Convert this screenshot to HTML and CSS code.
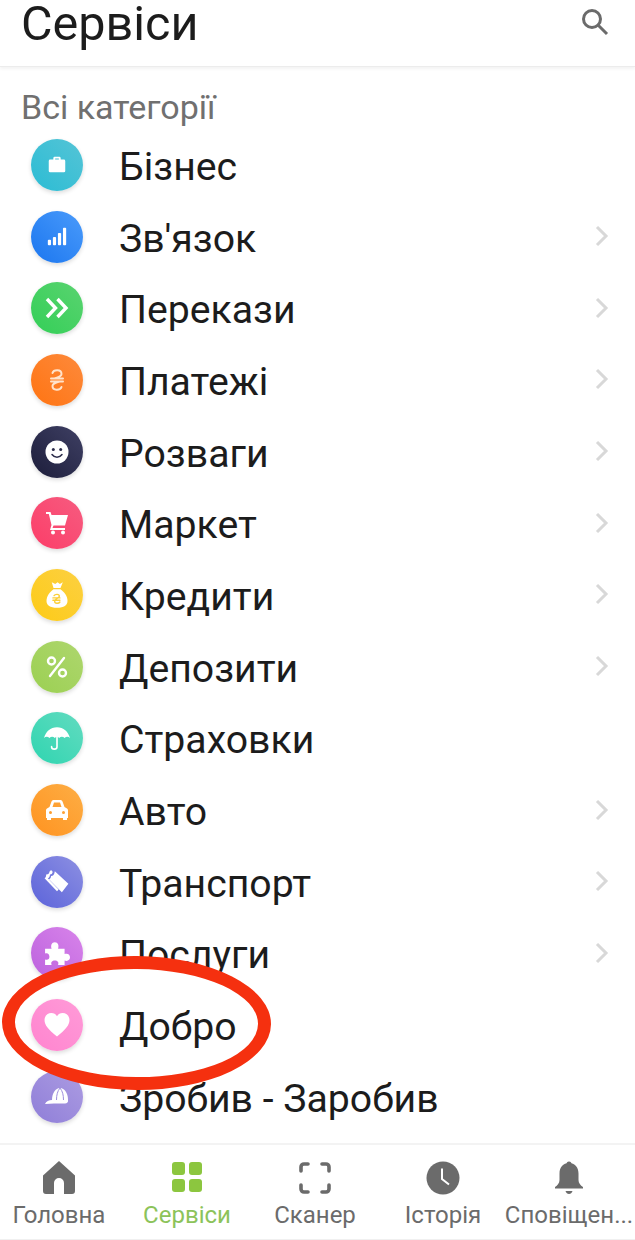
FILE: index.html
```html
<!DOCTYPE html>
<html lang="uk">
<head>
  <meta charset="UTF-8">
  <meta name="viewport" content="width=device-width, initial-scale=1.0">
  <title>Сервіси</title>
  <link rel="stylesheet" href="styles.css">
</head>
<body>
  <div class="container">
    <div class="header">
      <div class="header-title">Сервіси</div>
      <svg class="search-icon" viewBox="0 0 30 30"><circle cx="12" cy="12" r="8.5"/><path d="M18 18l9 9"/></svg>
    </div>

    <div class="content">
      <div class="section-title">Всі категорії</div>
      <div class="list">
        <div class="row">
          <div class="circle c-business">
            <svg viewBox="0 0 24 24"><path d="M8 6V4.500a1.500 1.500 0 0 1 1.500-1.500h5A1.500 1.500 0 0 1 16 4.500V6h3.500A1.500 1.500 0 0 1 21 7.500v11a1.500 1.500 0 0 1-1.500 1.500h-15A1.500 1.500 0 0 1 3 18.500v-11A1.500 1.500 0 0 1 4.500 6zM10 6h4V5h-4z" fill="#fff" fill-rule="evenodd"/></svg>
          </div>
          <div class="row-text">Бізнес</div>
        </div>
        <div class="row">
          <div class="circle c-signal">
            <svg viewBox="0 0 24 24" fill="#fff"><rect x="2" y="15" width="3.500" height="6" rx="1"/><rect x="7.500" y="12" width="3.500" height="9" rx="1"/><rect x="13" y="7.500" width="3.500" height="13.500" rx="1"/><rect x="18.500" y="2" width="3.500" height="19" rx="1"/></svg>
          </div>
          <div class="row-text">Зв'язок</div>
          <svg class="chevron" viewBox="0 0 14 22"><path d="M2 2l9 9-9 9"/></svg>
        </div>
        <div class="row">
          <div class="circle c-transfer">
            <svg class="big" viewBox="0 0 24 24" fill="none" stroke="#fff" stroke-width="3.400"><path d="M2 3l8.500 9L2 21M12.500 3l8.500 9-8.500 9"/></svg>
          </div>
          <div class="row-text">Перекази</div>
          <svg class="chevron" viewBox="0 0 14 22"><path d="M2 2l9 9-9 9"/></svg>
        </div>
        <div class="row">
          <div class="circle c-payment">
            <svg class="big" viewBox="0 0 24 24" fill="none" stroke="#ffe3cc" stroke-width="2" stroke-linecap="round"><path d="M7.500 5C8.500 1.500 16.500 1 16.500 6c0 3-4 3.500-7 4.500M14.500 13.500c-3 1-7 1.500-7 4.500 0 5 8 4.500 9 1M6 10.500h12M6 13.500h12"/></svg>
          </div>
          <div class="row-text">Платежі</div>
          <svg class="chevron" viewBox="0 0 14 22"><path d="M2 2l9 9-9 9"/></svg>
        </div>
        <div class="row">
          <div class="circle c-fun">
            <svg class="big" viewBox="0 0 24 24"><circle cx="12" cy="12" r="11.500" fill="#fff"/><circle cx="8.300" cy="9.500" r="1.500" fill="#2b2c4a"/><circle cx="15.700" cy="9.500" r="1.500" fill="#2b2c4a"/><path d="M7 14.500c2.500 3.500 7.500 3.500 10 0" fill="none" stroke="#2b2c4a" stroke-width="1.500" stroke-linecap="round"/></svg>
          </div>
          <div class="row-text">Розваги</div>
          <svg class="chevron" viewBox="0 0 14 22"><path d="M2 2l9 9-9 9"/></svg>
        </div>
        <div class="row">
          <div class="circle c-market">
            <svg class="big" viewBox="0 0 24 24" fill="#fff"><path d="M1 1h4.500l1 3H23l-3 10.500H8.500L7.500 17H20v2H5l1.500-5L3.800 3H1z"/><circle cx="8" cy="21.500" r="2"/><circle cx="18" cy="21.500" r="2"/></svg>
          </div>
          <div class="row-text">Маркет</div>
          <svg class="chevron" viewBox="0 0 14 22"><path d="M2 2l9 9-9 9"/></svg>
        </div>
        <div class="row">
          <div class="circle c-credit">
            <svg class="tall" viewBox="0 0 24 24"><path d="M7.500 1l3 1.500L12.500 1l2 1.500L17 1l-2 5H9z" fill="#fff"/><path d="M9 7h6c3.500 2.500 6 6 6 10 0 4-3 6-9 6s-9-2-9-6c0-4 2.500-7.500 6-10z" fill="#fff"/><path d="M9.500 12.500c1-1.500 4.500-1.500 4.500.5 0 1.500-4 2-4 4.500 0 2 3.500 2 4.500.5M8.500 14.500h6M8.500 16.500h6" fill="none" stroke="#fbcf38" stroke-width="1.200" stroke-linecap="round"/></svg>
          </div>
          <div class="row-text">Кредити</div>
          <svg class="chevron" viewBox="0 0 14 22"><path d="M2 2l9 9-9 9"/></svg>
        </div>
        <div class="row">
          <div class="circle c-deposit">
            <svg class="big" viewBox="0 0 24 24" fill="none" stroke="#fff" stroke-width="2.400" stroke-linecap="round"><circle cx="6.500" cy="6" r="3.500"/><circle cx="17.500" cy="18" r="3.500"/><path d="M19 3L5 21"/></svg>
          </div>
          <div class="row-text">Депозити</div>
          <svg class="chevron" viewBox="0 0 14 22"><path d="M2 2l9 9-9 9"/></svg>
        </div>
        <div class="row">
          <div class="circle c-insurance">
            <svg class="wide" viewBox="0 0 24 24"><path d="M12 2C18 2 22.500 6 24 12c-1.500-1.500-3.500-1.500-5 0-1.500-1.500-3.500-1.500-5 0-1.500-1.500-2.500-1.500-4 0-1.500-1.500-3.500-1.500-5 0-1.500-1.500-3.500-1.500-5 0C1.500 6 6 2 12 2z" fill="#fff"/><path d="M12 10v10c0 3-5 3-5 0" fill="none" stroke="#fff" stroke-width="1.500" stroke-linecap="round"/></svg>
          </div>
          <div class="row-text">Страховки</div>
        </div>
        <div class="row">
          <div class="circle c-auto">
            <svg class="big" viewBox="0 0 24 24"><path d="M4.500 9l2-5.500A2 2 0 0 1 8.400 2h7.200a2 2 0 0 1 1.900 1.500L19.500 9 22 10.500a2 2 0 0 1 1 1.700V20h-1v2h-4v-2H6v2H2v-2H1v-7.800a2 2 0 0 1 1-1.700zM7.500 9h9L15 4.500H9zM5.500 13a1.500 1.500 0 1 0 0 3 1.500 1.500 0 0 0 0-3zm13 0a1.500 1.500 0 1 0 0 3 1.500 1.500 0 0 0 0-3z" fill="#fff" fill-rule="evenodd"/></svg>
          </div>
          <div class="row-text">Авто</div>
          <svg class="chevron" viewBox="0 0 14 22"><path d="M2 2l9 9-9 9"/></svg>
        </div>
        <div class="row">
          <div class="circle c-transport">
            <svg class="wide" viewBox="0 0 24 24" fill="#fff"><path d="M10 2l12.500 11.500-6 8L4.500 9.500c1.500-.5 2-1.500 2-3 2 0 3-1.500 3.500-4.500z"/><path d="M5 2.500c0 1.500-1 2.500-3 2.500 0 2-.5 3-1.500 3.500L12 20.500l1.500-1.500L3.500 8.500C5 8 5.500 6.500 5.500 5 7 5 8 4 8 2.500L6.500 1z"/></svg>
          </div>
          <div class="row-text">Транспорт</div>
          <svg class="chevron" viewBox="0 0 14 22"><path d="M2 2l9 9-9 9"/></svg>
        </div>
        <div class="row">
          <div class="circle c-services">
            <svg class="wide" viewBox="0 0 24 24"><path d="M1 8h6C6 5 7 2 10 2s4 3 3 6h6v5c3-1 5 .5 5 3s-2 4-5 3v4h-6c1-2.500-.5-4-3-4s-4 1.500-3 4H1v-5c2.500 1 4-.5 4-2.500S3.500 11.500 1 12.500z" fill="#fff"/></svg>
          </div>
          <div class="row-text">Послуги</div>
          <svg class="chevron" viewBox="0 0 14 22"><path d="M2 2l9 9-9 9"/></svg>
        </div>
        <div class="row">
          <div class="circle c-good">
            <svg class="wide" viewBox="0 0 24 24"><path d="M12 22.500C4 16 .5 12 .5 7.500.5 3.500 3.500 1 6.800 1c2.200 0 4 1 5.200 3 1.200-2 3-3 5.200-3 3.300 0 6.300 2.500 6.300 6.500 0 4.500-3.500 8.500-11.500 15z" fill="#fff"/></svg>
          </div>
          <div class="row-text">Добро</div>
        </div>
        <div class="row">
          <div class="circle c-earn">
            <svg class="big" viewBox="0 0 24 24"><path d="M7 15C7 8 10.500 3 15 3s8 5 8 12z" fill="#fff"/><path d="M0 19c1-2.500 4-4 7-4h16c.5 2-1 3.500-3 3.500H9c-3 0-6 .5-9 .5z" fill="#fff"/><path d="M15 3c-2.500 3-3.500 7-3.500 12M15 3c2.500 3 3.500 7 3.500 12" fill="none" stroke="#9e8edd" stroke-width="1"/></svg>
          </div>
          <div class="row-text">Зробив - Заробив</div>
        </div>
      </div>
      <div class="highlight-ring"></div>
    </div>

    <div class="nav">
      <div class="nav-item">
        <svg viewBox="0 0 34 34" fill="#6b6b6b"><path d="M17 0L33 14.500V30a3 3 0 0 1-3 3h-8V22a5 5 0 0 0-10 0v11H4a3 3 0 0 1-3-3V14.500z"/></svg>
        <span>Головна</span>
      </div>
      <div class="nav-item active">
        <svg viewBox="0 0 34 34" fill="#8cc63f"><rect x="2" y="1" width="13" height="13" rx="3"/><rect x="19" y="1" width="13" height="13" rx="3"/><rect x="2" y="18" width="13" height="13" rx="3"/><rect x="19" y="18" width="13" height="13" rx="3"/></svg>
        <span>Сервіси</span>
      </div>
      <div class="nav-item">
        <svg viewBox="0 0 34 34" fill="none" stroke="#6b6b6b" stroke-width="3.600" stroke-linecap="round"><path d="M3 10V6a3 3 0 0 1 3-3h4M24 3h4a3 3 0 0 1 3 3v4M31 24v4a3 3 0 0 1-3 3h-4M10 31H6a3 3 0 0 1-3-3v-4"/></svg>
        <span>Сканер</span>
      </div>
      <div class="nav-item">
        <svg viewBox="0 0 34 34"><circle cx="17" cy="17" r="16.500" fill="#6b6b6b"/><path d="M16 7.500V18l7 5.500" fill="none" stroke="#fff" stroke-width="2"/></svg>
        <span>Історія</span>
      </div>
      <div class="nav-item">
        <svg viewBox="0 0 34 34" fill="#6b6b6b"><circle cx="17" cy="3" r="2.500"/><path d="M17 2c6 0 9.500 4.500 9.500 10.500V19c0 3 2 5.500 4.500 7v1.500H3V26c2.500-1.500 4.500-4 4.500-7v-6.500C7.500 6.500 11 2 17 2z"/><path d="M13.500 30h7c-.5 2-2 3-3.500 3s-3-1-3.500-3z"/></svg>
        <span>Сповіщен...</span>
      </div>
    </div>
  </div>
</body>
</html>
```

FILE: styles.css
```css
body {
  margin: 0;
  font-family: Roboto, "Noto Sans", sans-serif;
  background-color: #fff;
  color: #1c1c1c;
}
.container {
  display: flex;
  flex-direction: column;
  width: 635px;
  height: 1240px;
  overflow: hidden;
}
.header {
  display: flex;
  justify-content: space-between;
  height: 67px;
  padding: 0 25px 0 21px;
  box-sizing: border-box;
  border-bottom: 1px solid #ececec;
  box-shadow: 0 2px 3px rgba(0, 0, 0, 0.05);
}
.header-title {
  font-size: 48.5px;
  line-height: 48px;
}
.search-icon {
  width: 30px;
  height: 30px;
  margin-top: 7px;
  fill: none;
  stroke: #6b6b6b;
  stroke-width: 3;
}
.content {
  position: relative;
  flex: 1;
}
.section-title {
  padding: 23px 0 0 21px;
  font-size: 34px;
  line-height: 34px;
  color: #707070;
}
.list {
  display: flex;
  flex-direction: column;
  margin-top: 7px;
}
.row {
  display: flex;
  align-items: center;
  height: 71.7px;
  flex-shrink: 0;
  padding-left: 31px;
  padding-right: 26px;
}
.row-text {
  flex: 1;
  margin-left: 36px;
  font-size: 39.2px;
}
.circle {
  display: flex;
  align-items: center;
  justify-content: center;
  width: 52px;
  height: 52px;
  margin-bottom: 4px;
  border-radius: 50%;
  box-shadow: 0 2px 4px rgba(0, 0, 0, 0.14);
}
.circle svg {
  width: 22px;
  height: 22px;
}
.circle svg.big {
  width: 24px;
  height: 24px;
}
.circle svg.tall {
  width: 28px;
  height: 28px;
}
.circle svg.wide {
  width: 26px;
  height: 26px;
}
.chevron {
  width: 14px;
  height: 22px;
  margin-bottom: 5px;
  fill: none;
  stroke: #d8d8d8;
  stroke-width: 3;
}
.c-business { background: linear-gradient(45deg, #2bbcd4, #55c4d6); }
.c-signal { background: linear-gradient(45deg, #1b76ef, #4a9bfb); }
.c-transfer { background: linear-gradient(45deg, #33cf57, #5ad370); }
.c-payment { background: linear-gradient(45deg, #ff7412, #fd8a3c); }
.c-fun { background: linear-gradient(45deg, #1c1d3a, #3f4064); }
.c-market { background: linear-gradient(45deg, #fc3d68, #f65c80); }
.c-credit { background: linear-gradient(45deg, #fdcb17, #fcd042); }
.c-deposit { background: linear-gradient(45deg, #9bd052, #aed66e); }
.c-insurance { background: linear-gradient(45deg, #2fd5b0, #63dbc0); }
.c-auto { background: linear-gradient(45deg, #ff9320, #fdae45); }
.c-transport { background: linear-gradient(45deg, #5b63da, #8d90e2); }
.c-services { background: linear-gradient(45deg, #bc62de, #d884ea); }
.c-good { background: linear-gradient(45deg, #ff84cf, #ff9bd8); }
.c-earn { background: linear-gradient(45deg, #8f7ed8, #ac9ce2); }
.highlight-ring {
  position: absolute;
  left: 2px;
  top: 889px;
  width: 269px;
  height: 134px;
  box-sizing: border-box;
  border: 13px solid #f5300f;
  border-radius: 50%;
  transform: rotate(0.5deg);
}
.nav {
  display: grid;
  grid-template-columns: repeat(4, 118px) 114px;
  column-gap: 10px;
  height: 97px;
  padding-top: 16px;
  box-sizing: border-box;
  border-top: 2px solid #f3f3f3;
  border-bottom: 1px solid #f0f0f0;
  background-color: #fff;
}
.nav-item {
  display: flex;
  flex-direction: column;
  align-items: center;
  font-size: 24px;
  line-height: 28px;
  color: #6b6b6b;
  white-space: nowrap;
}
.nav-item svg {
  width: 34px;
  height: 34px;
  margin-bottom: 6px;
}
.nav-item.active {
  color: #8cc35a;
}
```
